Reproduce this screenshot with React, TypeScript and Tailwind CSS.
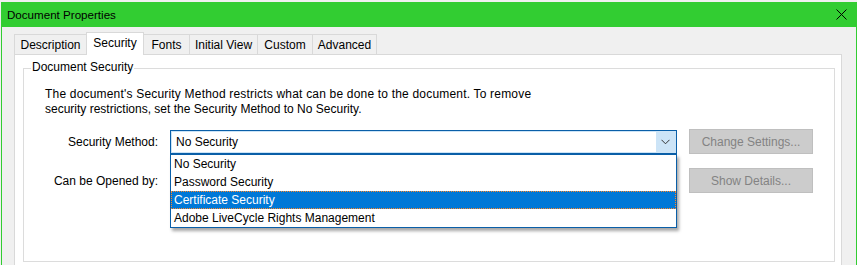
const tabs = [
  { label: "Description", w: "w-[72px] border-l" },
  { label: "Security", w: "w-[58px] border-x", active: true },
  { label: "Fonts", w: "w-[46px] border-r" },
  { label: "Initial View", w: "w-[68px] border-r" },
  { label: "Custom", w: "w-[55px] border-r" },
  { label: "Advanced", w: "w-[64px] border-r" },
];

const options = [
  "No Security",
  "Password Security",
  "Certificate Security",
  "Adobe LiveCycle Rights Management",
];

function DisabledButton(props: { label: string }) {
  return (
    <div className="w-[124px] h-[25px] flex items-center justify-center bg-[#cccccc] border border-[#bfbfbf] text-[#838383]">
      {props.label}
    </div>
  );
}

export default function App() {
  return (
    <div
      className="w-[857px] h-[265px] overflow-hidden bg-[#f0f0f0] pt-[2px] pl-[1px] text-[12px] text-black"
      style={{ fontFamily: '"Liberation Sans", Arial, sans-serif' }}
    >
      <div className="h-[263px] border-x border-[#32cd32] flex flex-col">
        {/* Title bar */}
        <div className="h-[25px] shrink-0 bg-[#32cd32] flex items-center justify-between pl-[5px] pr-[9px]">
          <span className="text-[11.6px]">Document Properties</span>
          <svg width="11" height="11" viewBox="0 0 11 11" className="shrink-0">
            <path d="M0.5 0.5 L10.5 10.5 M10.5 0.5 L0.5 10.5" stroke="#000" strokeWidth="1" />
          </svg>
        </div>

        {/* Body */}
        <div className="flex-1 flex flex-col pt-[5px] pl-[12px] pr-[14px]">
          {/* Tab strip */}
          <div className="flex items-end h-[22px] shrink-0">
            {tabs.map((t) => (
              <div
                key={t.label}
                className={
                  t.active
                    ? `${t.w} h-[23px] -mb-px relative z-10 bg-white border-t border-[#d9d9d9] flex items-center justify-center pb-[2px]`
                    : `${t.w} h-[20px] bg-[#f0f0f0] border-t border-[#d9d9d9] flex items-center justify-center`
                }
              >
                {t.label}
              </div>
            ))}
          </div>

          {/* Tab panel */}
          <div className="flex-1 bg-white border-t border-x border-[#d9d9d9] pt-[13px] pl-[8px] pr-[6px]">
            <div className="relative h-[194px] border border-[#dcdcdc] pt-[18px] pl-[21px]">
              <span className="absolute -top-[9px] left-[7px] bg-white px-[1px] leading-[15px]">
                Document Security
              </span>

              <p className="leading-[15px]">
                <span className="tracking-[0.19px]">
                  The document's Security Method restricts what can be done to the document. To remove
                </span>
                <br />
                security restrictions, set the Security Method to No Security.
              </p>

              <div className="mt-[12px] grid grid-cols-[113px_507px_124px] gap-x-[12px] gap-y-[14px] items-center">
                <div className="text-right">Security Method:</div>
                <div className="relative">
                  <div className="h-[24px] flex border border-[#0a5fa8] bg-[#cce4f7] p-px">
                    <div className="flex-1 bg-white flex items-center pl-[4px]">No Security</div>
                    <div className="w-[19px] flex items-center justify-center">
                      <svg width="9" height="6" viewBox="0 0 9 6">
                        <path d="M0.5 0.8 L4.5 4.8 L8.5 0.8" fill="none" stroke="#333" strokeWidth="1" />
                      </svg>
                    </div>
                  </div>
                  {/* Open list */}
                  <div className="absolute left-0 top-[24px] w-[507px] z-20 bg-white border border-[#0a5fa8] shadow-[2px_3px_3px_rgba(0,0,0,0.35)]">
                    {options.map((o) => (
                      <div
                        key={o}
                        className={
                          o === "Certificate Security"
                            ? "h-[18px] flex items-center pl-[2px] bg-[#0078d7] text-white border border-dotted border-[#ff8728]"
                            : "h-[18px] flex items-center pl-[3px]"
                        }
                      >
                        {o}
                      </div>
                    ))}
                  </div>
                </div>
                <DisabledButton label="Change Settings..." />

                <div className="text-right">Can be Opened by:</div>
                <div className="h-[25px]" />
                <DisabledButton label="Show Details..." />
              </div>
            </div>
          </div>
        </div>
      </div>
    </div>
  );
}
